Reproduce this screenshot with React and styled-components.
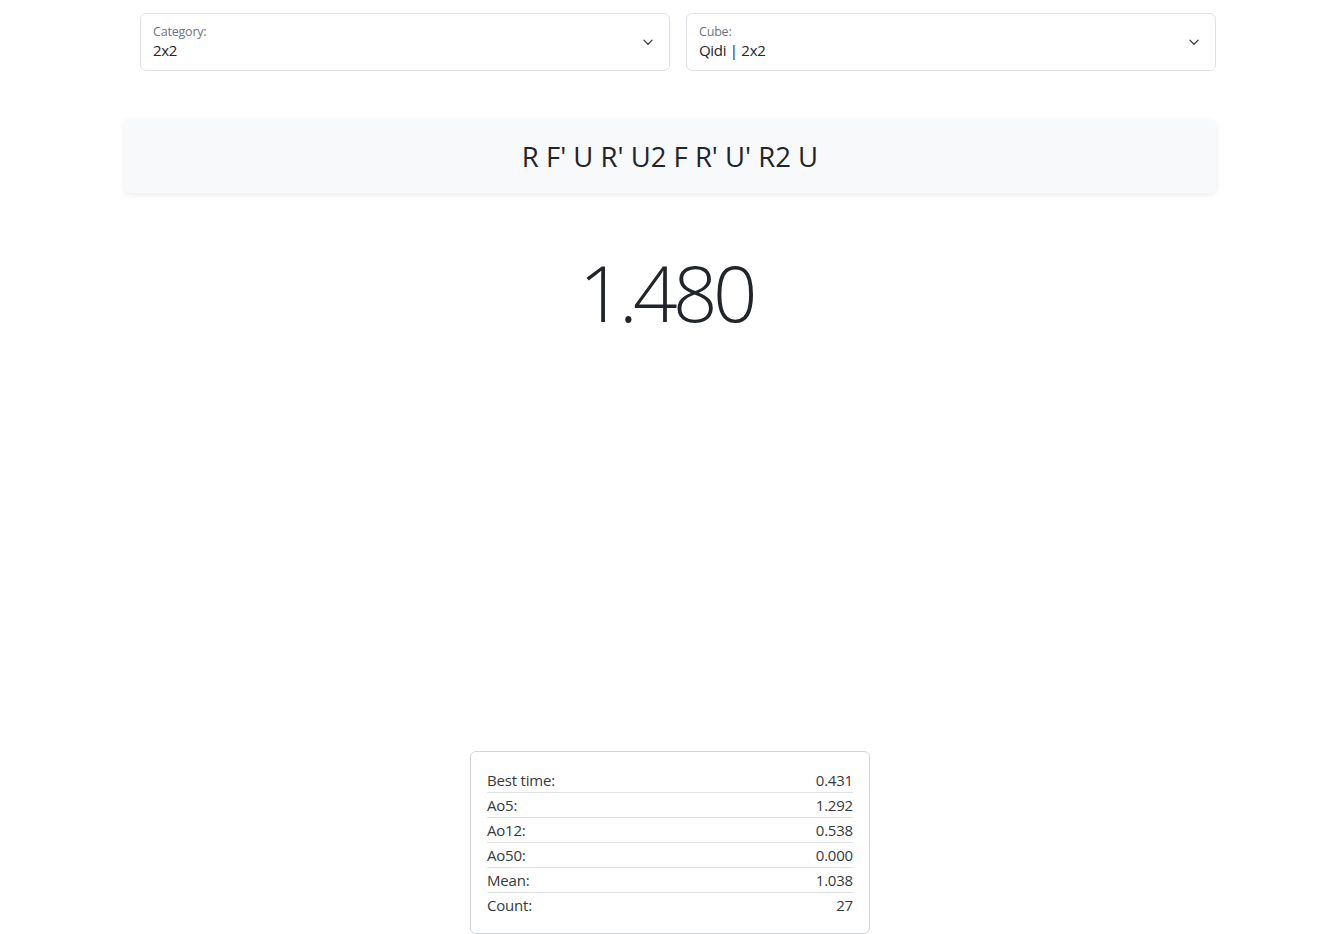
import React from "react";
import styled, { createGlobalStyle } from "styled-components";

const GlobalStyle = createGlobalStyle`
  body {
    margin: 0;
    background: #fff;
    color: #212529;
    font-family: "Open Sans", "Noto Sans", sans-serif;
    font-size: 16px;
    line-height: 1.5;
  }
`;

const Page = styled.div`
  width: 1096px;
  box-sizing: border-box;
  margin: 0 auto;
  padding: 13px 0 0 4px;
  display: flex;
  flex-direction: column;
  align-items: center;
`;

const SelectRow = styled.div`
  width: 1076px;
  margin-left: 16px;
  display: grid;
  grid-template-columns: 1fr 1fr;
  gap: 16px;
`;

const Select = styled.div`
  height: 58px;
  box-sizing: border-box;
  border: 1px solid #dee2e6;
  border-radius: 6px;
  padding: 9px 40px 0 12px;
  position: relative;
  background: #fff;
`;

const Label = styled.div`
  font-size: 12.5px;
  line-height: 18px;
  color: #6c757d;
  letter-spacing: -0.2px;
`;

const Value = styled.div`
  font-size: 15px;
  line-height: 19px;
  color: #212529;
  letter-spacing: -0.3px;
`;

const Chevron = styled.svg`
  position: absolute;
  right: 13px;
  top: 20px;
  width: 16px;
  height: 16px;
`;

const ScrambleCard = styled.div`
  width: 100%;
  margin-top: 48px;
  height: 74px;
  box-sizing: border-box;
  background: #f8f9fa;
  border-radius: 6px;
  box-shadow: 0 2px 6px rgba(0, 0, 0, 0.08);
  display: flex;
  align-items: center;
  justify-content: center;
`;

const Scramble = styled.h3`
  margin: 0;
  font-weight: 400;
  font-size: 27.5px;
  letter-spacing: 0;
  line-height: 1.2;
`;

const Timer = styled.div`
  margin-top: 53px;
  margin-right: 8px;
  font-size: 78px;
  font-weight: 300;
  line-height: 1.2;
  letter-spacing: -4.5px;
`;

const Stats = styled.div`
  margin-top: 411px;
  width: 400px;
  box-sizing: border-box;
  border: 1px solid #d3d6d9;
  border-radius: 6px;
  padding: 16px 16px 16px;
`;

const Row = styled.div`
  display: flex;
  justify-content: space-between;
  font-size: 15px;
  line-height: 24px;
  color: #343a40;
  border-bottom: ${(p) => (p.$last ? "none" : "1px solid #dee2e6")};
  letter-spacing: -0.2px;
`;

const Chev = () => (
  <Chevron viewBox="0 0 16 16" fill="none">
    <path
      d="M2.5 5.5l5.5 5.5 5.5-5.5"
      stroke="#343a40"
      strokeWidth="1.6"
      strokeLinecap="round"
      strokeLinejoin="round"
      transform="translate(2 2) scale(0.75)"
    />
  </Chevron>
);

const stats = [
  ["Best time:", "0.431"],
  ["Ao5:", "1.292"],
  ["Ao12:", "0.538"],
  ["Ao50:", "0.000"],
  ["Mean:", "1.038"],
  ["Count:", "27"],
];

export default function App() {
  return (
    <>
      <GlobalStyle />
      <Page>
        <SelectRow>
          <Select>
            <Label>Category:</Label>
            <Value>2x2</Value>
            <Chev />
          </Select>
          <Select>
            <Label>Cube:</Label>
            <Value>Qidi | 2x2</Value>
            <Chev />
          </Select>
        </SelectRow>
        <ScrambleCard>
          <Scramble>R F' U R' U2 F R' U' R2 U</Scramble>
        </ScrambleCard>
        <Timer>1.480</Timer>
        <Stats>
          {stats.map(([k, v], i) => (
            <Row key={k} $last={i === stats.length - 1}>
              <span>{k}</span>
              <span>{v}</span>
            </Row>
          ))}
        </Stats>
      </Page>
    </>
  );
}
